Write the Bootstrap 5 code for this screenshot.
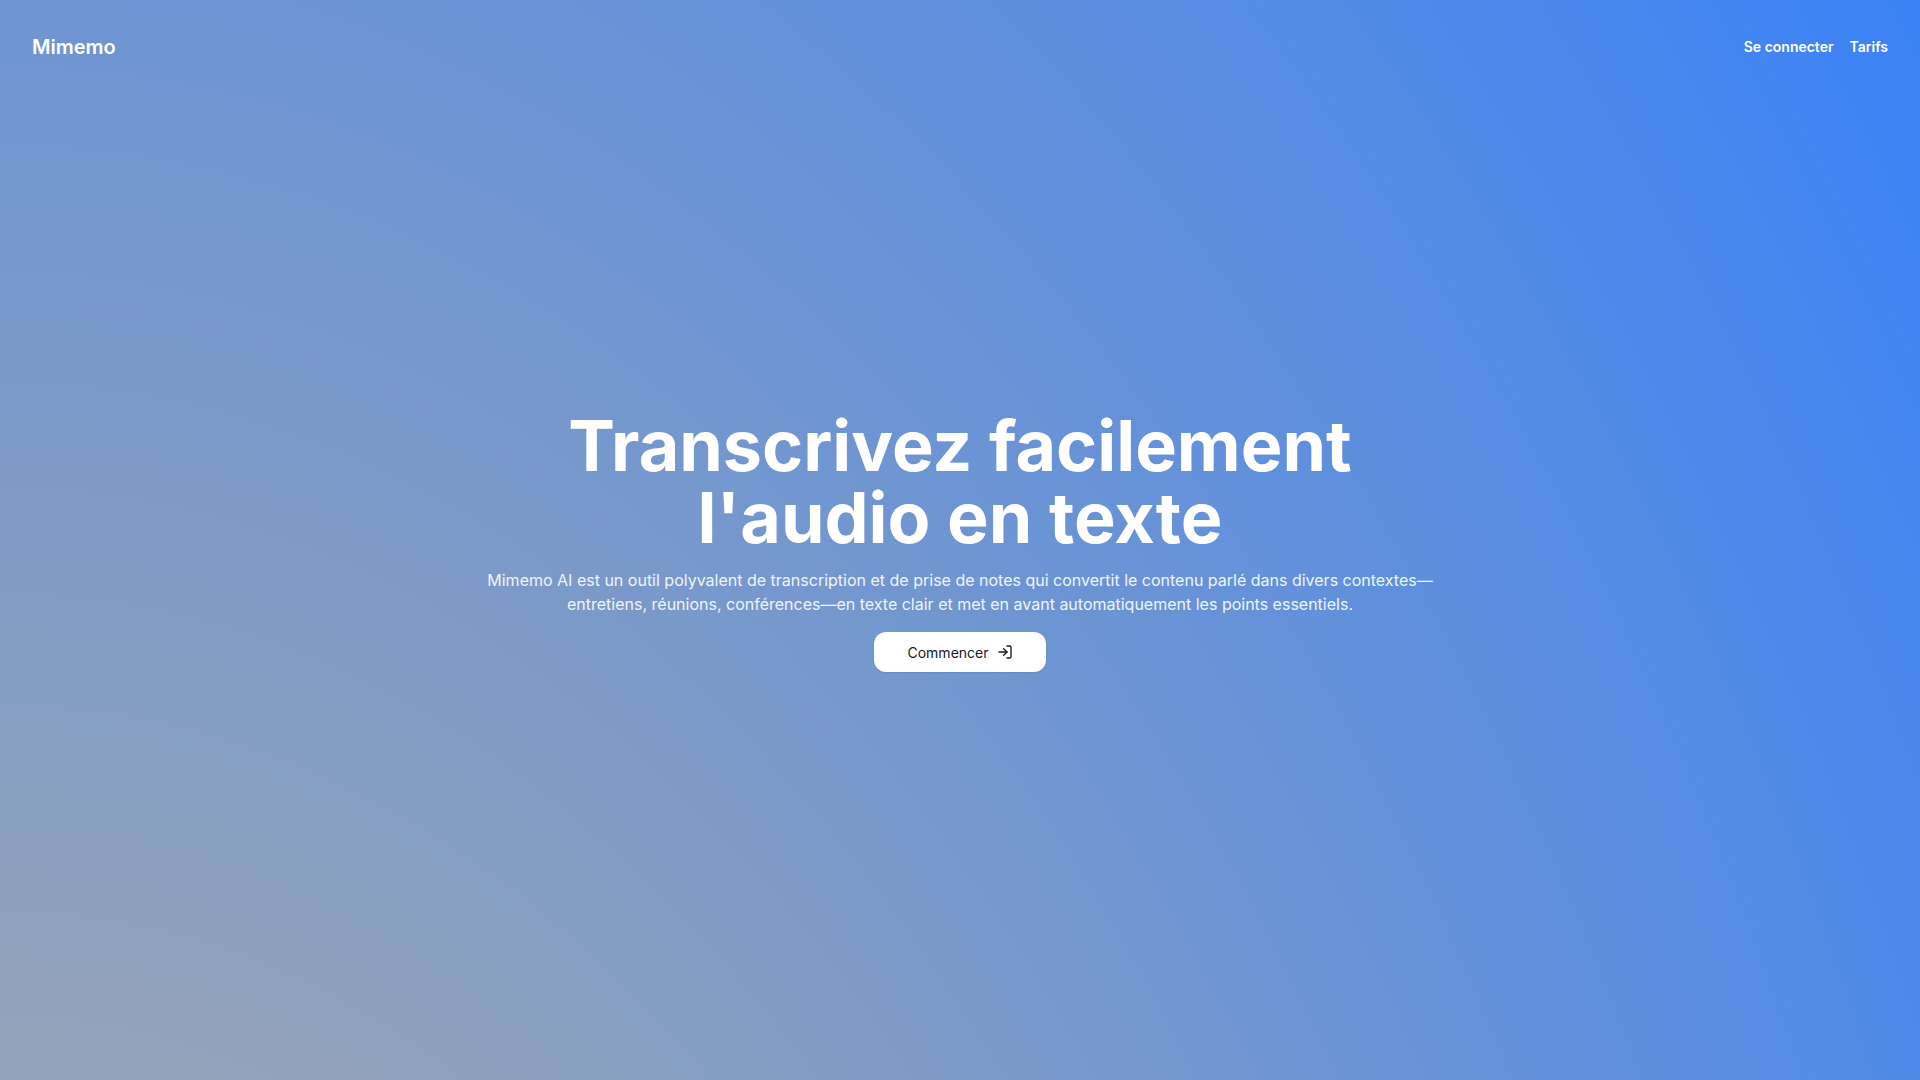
<!DOCTYPE html>
<html lang="fr">
<head>
<meta charset="utf-8">
<meta name="viewport" content="width=device-width, initial-scale=1">
<title>Mimemo</title>
<link href="https://cdn.jsdelivr.net/npm/bootstrap@5.3.0/dist/css/bootstrap.min.css" rel="stylesheet">
<style>
  body {
    font-family: Inter, "Open Sans", sans-serif;
    background: radial-gradient(132% 400% at 0% 263%, #94a3b8 40%, #3b82f6 100%) no-repeat;
  }
  .site-header { height: 94px; }
  .brand { font-size: 20px; line-height: 28px; }
  .site-link { font-size: 14px; line-height: 20px; }
  .hero { padding-bottom: 92px; }
  .hero-title { font-size: 70px; line-height: 72px; max-width: 896px; margin: 0 0 14px; }
  .hero-text { font-size: 16px; line-height: 24px; max-width: 960px; color: #f1f5f9; }
  .btn-start {
    --bs-btn-color: #18181b;
    --bs-btn-bg: #fff;
    --bs-btn-hover-bg: #f4f4f5;
    --bs-btn-border-radius: 12px;
    --bs-btn-font-size: 14px;
    height: 40px;
    box-shadow: 0 1px 2px rgba(0, 0, 0, .1);
  }
</style>
</head>
<body class="min-vh-100 d-flex flex-column text-white">
  <header class="site-header d-flex align-items-center justify-content-between px-4 mx-2">
    <a class="brand fw-semibold text-white text-decoration-none" href="#">Mimemo</a>
    <nav class="d-flex gap-3" aria-label="Navigation principale">
      <a class="site-link fw-semibold text-white text-decoration-none" href="#">Se connecter</a>
      <a class="site-link fw-semibold text-white text-decoration-none" href="#">Tarifs</a>
    </nav>
  </header>
  <main class="hero flex-grow-1 d-flex flex-column align-items-center justify-content-center text-center">
    <h1 class="hero-title fw-bold">Transcrivez facilement l'audio en texte</h1>
    <p class="hero-text mb-3">Mimemo AI est un outil polyvalent de transcription et de prise de notes qui convertit le contenu parlé dans divers contextes—entretiens, réunions, conférences—en texte clair et met en avant automatiquement les points essentiels.</p>
    <button type="button" class="btn btn-start d-inline-flex align-items-center gap-2 px-4"><span class="ps-2">Commencer</span>
      <svg class="me-2" width="16" height="16" viewBox="0 0 24 24" fill="none" stroke="currentColor" stroke-width="2" stroke-linecap="round" stroke-linejoin="round" aria-hidden="true"><path d="M15 3h4a2 2 0 0 1 2 2v14a2 2 0 0 1-2 2h-4"/><path d="M10 17l5-5-5-5"/><path d="M15 12H3"/></svg>
    </button>
  </main>
  <script src="https://cdn.jsdelivr.net/npm/bootstrap@5.3.0/dist/js/bootstrap.bundle.min.js"></script>
</body>
</html>
